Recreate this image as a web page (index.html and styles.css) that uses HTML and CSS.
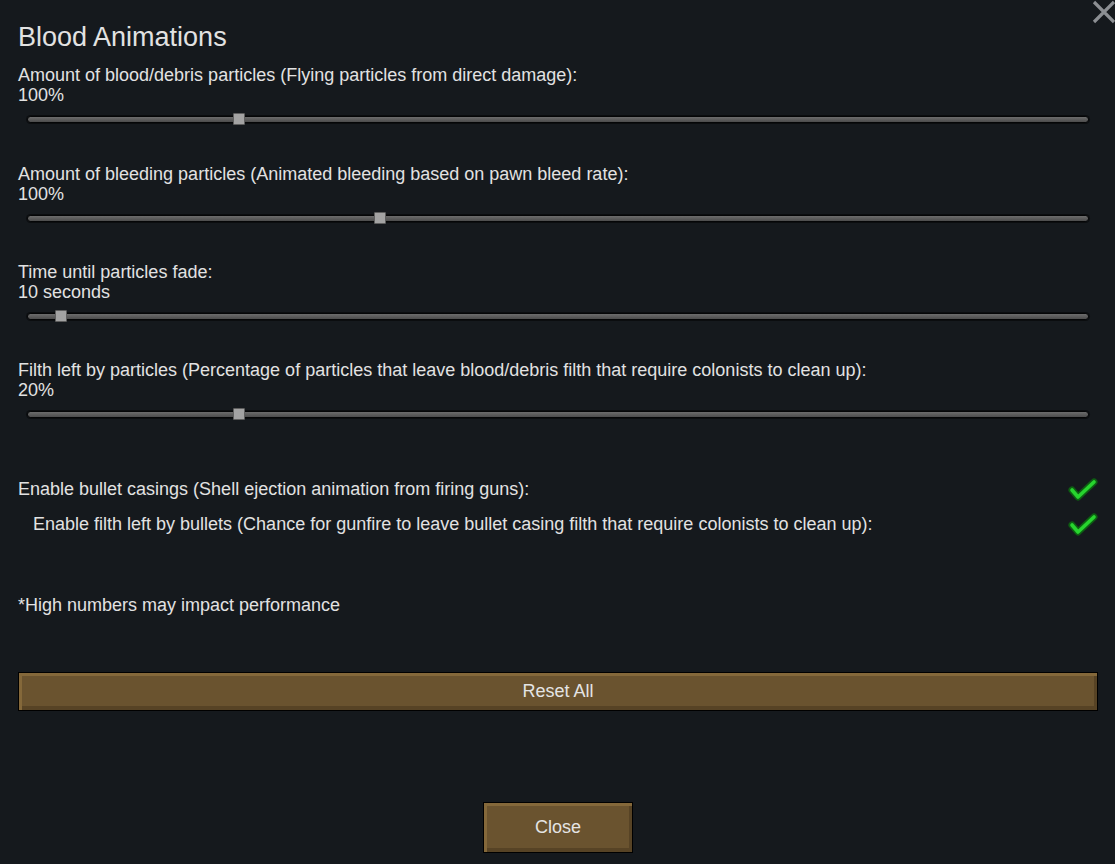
FILE: index.html
```html
<!DOCTYPE html>
<html lang="en">
<head>
    <meta charset="UTF-8">
    <title>Blood Animations</title>
    <link rel="stylesheet" href="styles.css">
</head>
<body>
    <div class="window">
        <svg class="close-x" width="26" height="26" viewBox="0 0 26 26">
            <path d="M3 3 L23 23 M23 3 L3 23" stroke="#8c8f93" stroke-width="3.2" fill="none"/>
        </svg>

        <h1>Blood Animations</h1>

        <div class="setting">
            <div class="label">Amount of blood/debris particles (Flying particles from direct damage):</div>
            <div class="value">100%</div>
            <div class="slider"><div class="track"><span class="thumb" style="left: 19.9%"></span></div></div>
        </div>

        <div class="setting">
            <div class="label">Amount of bleeding particles (Animated bleeding based on pawn bleed rate):</div>
            <div class="value">100%</div>
            <div class="slider"><div class="track"><span class="thumb" style="left: 33.2%"></span></div></div>
        </div>

        <div class="setting">
            <div class="label">Time until particles fade:</div>
            <div class="value">10 seconds</div>
            <div class="slider"><div class="track"><span class="thumb" style="left: 3.1%"></span></div></div>
        </div>

        <div class="setting">
            <div class="label">Filth left by particles (Percentage of particles that leave blood/debris filth that require colonists to clean up):</div>
            <div class="value">20%</div>
            <div class="slider"><div class="track"><span class="thumb" style="left: 19.9%"></span></div></div>
        </div>

        <div class="checks">
            <div class="check-row">
                <span>Enable bullet casings (Shell ejection animation from firing guns):</span>
                <svg class="tick" width="30" height="26" viewBox="0 0 30 26">
                    <path d="M4 13 L10 20 L26 5" stroke="#0d5f12" stroke-width="7" fill="none" stroke-linecap="round" stroke-linejoin="round"/>
                    <path d="M4 13 L10 20 L26 5" stroke="#27d42e" stroke-width="3.6" fill="none" stroke-linecap="round" stroke-linejoin="round"/>
                </svg>
            </div>
            <div class="check-row sub">
                <span>Enable filth left by bullets (Chance for gunfire to leave bullet casing filth that require colonists to clean up):</span>
                <svg class="tick" width="30" height="26" viewBox="0 0 30 26">
                    <path d="M4 13 L10 20 L26 5" stroke="#0d5f12" stroke-width="7" fill="none" stroke-linecap="round" stroke-linejoin="round"/>
                    <path d="M4 13 L10 20 L26 5" stroke="#27d42e" stroke-width="3.6" fill="none" stroke-linecap="round" stroke-linejoin="round"/>
                </svg>
            </div>
        </div>

        <p class="note">*High numbers may impact performance</p>

        <button class="btn reset-btn">Reset All</button>

        <div class="footer">
            <button class="btn close-btn">Close</button>
        </div>
    </div>
</body>
</html>
```

FILE: styles.css
```css
body {
    margin: 0;
    background: #15191d;
    font-family: 'Liberation Sans', Arial, sans-serif;
    color: #e2e2e2;
}
.window {
    position: relative;
    width: 1080px;
    height: 864px;
    padding: 0 17px 0 18px;
    box-sizing: content-box;
}
.close-x {
    position: absolute;
    top: -1px;
    right: -2px;
}
h1 {
    margin: 0;
    padding-top: 22px;
    font-size: 27px;
    font-weight: normal;
    line-height: 30px;
    margin-bottom: 13px;
}
.setting {
    margin-bottom: 30px;
}
.setting:first-of-type {
    margin-bottom: 31px;
}
.label, .value {
    font-size: 18px;
    line-height: 20px;
}
.slider {
    height: 28px;
    display: flex;
    align-items: center;
    padding: 0 9px;
}
.track {
    position: relative;
    flex: 1;
    height: 5px;
    border: 1px solid #050607;
    border-radius: 4px;
    background: linear-gradient(#6c6c6c, #4c4c4c);
    box-shadow: 0 0 0 1px rgba(0, 0, 0, 0.45);
}
.thumb {
    position: absolute;
    top: 50%;
    width: 10px;
    height: 10px;
    transform: translate(-50%, -50%);
    background: #a3a3a3;
    border: 1px solid #5e5e5e;
    border-radius: 1px;
}
.checks {
    margin-top: 44px;
}
.check-row {
    display: flex;
    justify-content: space-between;
    align-items: center;
    height: 35px;
    font-size: 18px;
}
.check-row.sub {
    padding-left: 15px;
}
.note {
    margin: 53px 0 0;
    font-size: 18px;
    line-height: 20px;
}
.btn {
    font-family: inherit;
    font-size: 18px;
    color: #e4e4e4;
    background: #6a532f;
    border: 1px solid #000;
    box-shadow: inset 3px 3px 0 #84683a, inset -3px -4px 0 #574325;
    cursor: pointer;
}
.reset-btn {
    display: block;
    width: 1080px;
    height: 39px;
    margin-top: 57px;
}
.footer {
    display: flex;
    justify-content: center;
    margin-top: 91px;
}
.close-btn {
    width: 150px;
    height: 51px;
}
```
